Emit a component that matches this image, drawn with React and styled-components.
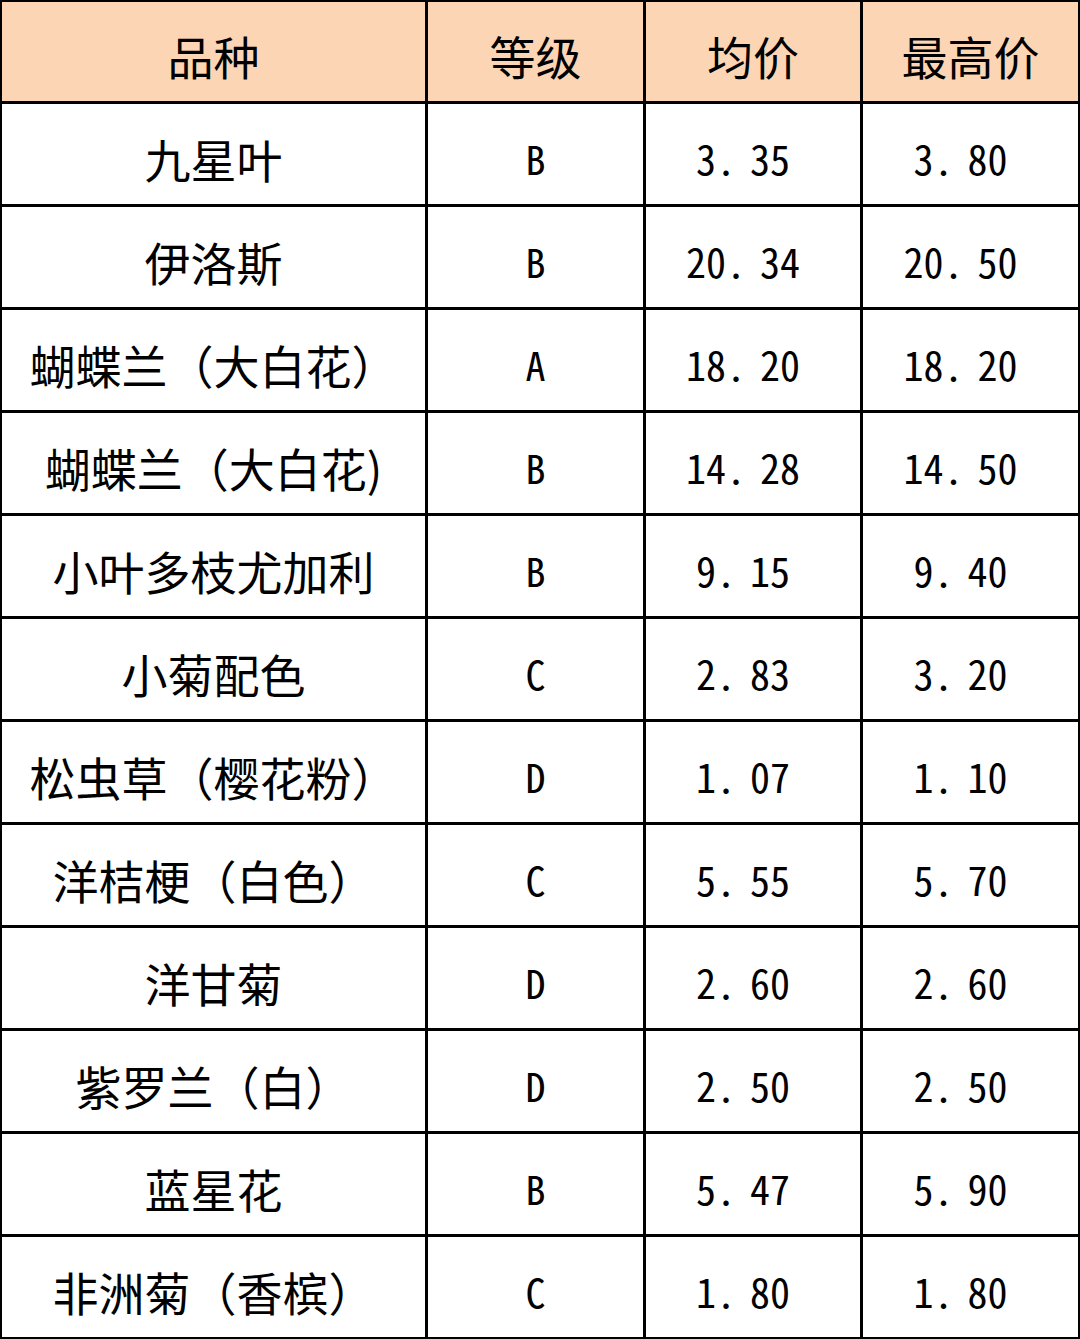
import React from 'react'
import styled, { createGlobalStyle } from 'styled-components'

const GlobalStyle = createGlobalStyle`
    html, body {
        margin: 0;
        padding: 0;
        background: #ffffff;
    }
`

const Sheet = styled.div`
    width: 1080px;
    box-sizing: border-box;
    display: grid;
    grid-template-columns: 423px 215px 214px 215px;
    grid-auto-rows: 100px;
    grid-template-rows: 99px;
    gap: 3px;
    padding: 2px;
    background: #000000;
`

const Cell = styled.div`
    display: flex;
    align-items: center;
    justify-content: center;
    padding-top: ${props => props.head ? '6px' : '8px'};
    box-sizing: border-box;
    background: ${props => props.head ? '#FCD5B4' : '#ffffff'};
    color: #000000;
    font-family: ${props => props.mono
        ? '"Noto Sans Mono CJK SC", "DejaVu Sans Mono", monospace'
        : '"Noto Sans CJK SC", sans-serif'};
    font-size: ${props => props.mono ? '40px' : '46px'};
    white-space: pre;
    line-height: 1;
`

// the sheet leaves a wide gap after the decimal point and a blank at the end
const Gap = styled.span`
    display: inline-block;
    width: ${props => props.w}px;
`

const headers = ['品种', '等级', '均价', '最高价']

const rows = [
    ['九星叶', 'B', '3.35', '3.80'],
    ['伊洛斯', 'B', '20.34', '20.50'],
    ['蝴蝶兰（大白花）', 'A', '18.20', '18.20'],
    ['蝴蝶兰（大白花)', 'B', '14.28', '14.50'],
    ['小叶多枝尤加利', 'B', '9.15', '9.40'],
    ['小菊配色', 'C', '2.83', '3.20'],
    ['松虫草（樱花粉）', 'D', '1.07', '1.10'],
    ['洋桔梗（白色）', 'C', '5.55', '5.70'],
    ['洋甘菊', 'D', '2.60', '2.60'],
    ['紫罗兰（白）', 'D', '2.50', '2.50'],
    ['蓝星花', 'B', '5.47', '5.90'],
    ['非洲菊（香槟）', 'C', '1.80', '1.80'],
]

const Price = ({ value }) => {
    const [int, dec] = value.split('.')
    return (
        <Cell mono>
            {int}.<Gap w={14} />{dec}<Gap w={20} />
        </Cell>
    )
}

function App() {
    return (
        <>
            <GlobalStyle />
            <Sheet>
                {headers.map(h => <Cell head key={h}>{h}</Cell>)}
                {rows.map((r, i) => (
                    <React.Fragment key={i}>
                        <Cell>{r[0]}</Cell>
                        <Cell mono>{r[1]}</Cell>
                        <Price value={r[2]} />
                        <Price value={r[3]} />
                    </React.Fragment>
                ))}
            </Sheet>
        </>
    )
}

export default App
